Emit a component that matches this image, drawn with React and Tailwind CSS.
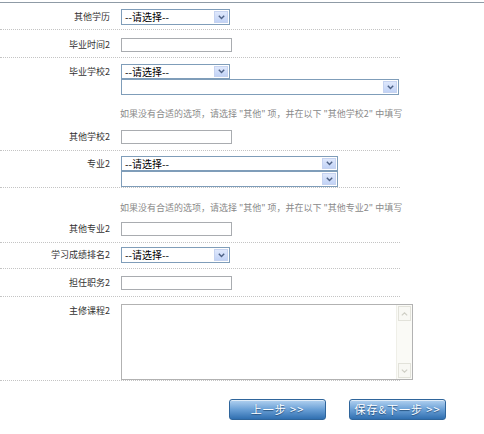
import React from 'react';

const FONT = { fontFamily: '"Noto Sans CJK SC", "Noto Sans", sans-serif' };

// XP-style dropdown box
function FakeSelect({ w, h = 16, text = '' }) {
  return (
    <div
      className="relative border border-[#7f9db9] bg-white text-[10px] leading-none text-black flex items-center pl-[3px]"
      style={{ width: w, height: h }}
    >
      <span>{text}</span>
      <span className="absolute right-px top-px bottom-px w-[14px] bg-gradient-to-b from-[#dfe8fc] to-[#c2d3f6] border border-[#c6d3f0] flex items-center justify-center">
        <svg width="7" height="5" viewBox="0 0 7 5">
          <path d="M0.8 0.8 L3.5 3.6 L6.2 0.8" fill="none" stroke="#4d6185" strokeWidth="1.4" />
        </svg>
      </span>
    </div>
  );
}

function TextBox({ w = 111 }) {
  return <div className="h-[14px] border border-[#a9acb0] bg-white" style={{ width: w }} />;
}

function Line({ label, h = 16, children, className = '' }) {
  return (
    <div className={`flex items-start ${className}`}>
      <div
        className="w-[110px] shrink-0 text-right text-[9px] text-[#333]"
        style={{ height: h, lineHeight: `${h}px` }}
      >
        {label}
      </div>
      <div className="ml-[11px]">{children}</div>
    </div>
  );
}

function Hint({ name, className = '' }) {
  return (
    <div className={`pl-[120px] h-[12px] leading-[12px] text-[9px] text-[#8a8a8a] whitespace-nowrap ${className}`}>
      如果没有合适的选项，请选择 "其他" 项，并在以下 "{name}" 中填写
    </div>
  );
}

function BlueButton({ children }) {
  return (
    <button
      className="w-[97px] h-[21px] rounded-[3px] border border-[#2f659b] bg-gradient-to-b from-[#b3d2f0] via-[#6aa0d6] to-[#2f6fb0] text-white text-[11px] leading-none tracking-[1px] shadow-[inset_0_1px_0_rgba(255,255,255,0.6)]"
      style={{ textShadow: '0 1px 1px #24507e' }}
    >
      {children}
    </button>
  );
}

export default function App() {
  return (
    <div className="w-[484px] h-[434px] bg-white overflow-hidden" style={FONT}>
      {/* top rule */}
      <div className="mt-[2px] h-px bg-[#8f9ba6]" />

      <div className="w-[400px]">
        {/* 其他学历 */}
        <div className="h-[27px] pt-[6px] border-b border-dotted border-[#c4c4c4]">
          <Line label="其他学历">
            <FakeSelect w={109} text="--请选择--" />
          </Line>
        </div>

        {/* 毕业时间2 */}
        <div className="h-[28px] pt-[8px] border-b border-dotted border-[#c4c4c4]">
          <Line label="毕业时间2" h={14}>
            <TextBox />
          </Line>
        </div>

        {/* 毕业学校2 + 其他学校2 */}
        <div className="h-[93px] pt-[6px] border-b border-dotted border-[#c4c4c4]">
          <Line label="毕业学校2" h={15}>
            <FakeSelect w={109} h={15} text="--请选择--" />
            <FakeSelect w={278} h={16} />
          </Line>
          <Hint name="其他学校2" className="mt-[13px]" />
          <Line label="其他学校2" h={14} className="mt-[10px]">
            <TextBox />
          </Line>
        </div>

        {/* 专业2 */}
        <div className="h-[37px] pt-[5px] border-b border-dotted border-[#c4c4c4]">
          <Line label="专业2" h={15}>
            <FakeSelect w={217} h={15} text="--请选择--" />
            <FakeSelect w={217} h={16} />
          </Line>
        </div>

        {/* 其他专业2 */}
        <div className="h-[55px] pt-[14px] border-b border-dotted border-[#c4c4c4]">
          <Hint name="其他专业2" />
          <Line label="其他专业2" h={14} className="mt-[8px]">
            <TextBox />
          </Line>
        </div>

        {/* 学习成绩排名2 */}
        <div className="h-[26px] pt-[4px] border-b border-dotted border-[#c4c4c4]">
          <Line label="学习成绩排名2">
            <FakeSelect w={109} text="--请选择--" />
          </Line>
        </div>

        {/* 担任职务2 */}
        <div className="h-[28px] pt-[7px] border-b border-dotted border-[#c4c4c4]">
          <Line label="担任职务2" h={14}>
            <TextBox />
          </Line>
        </div>

        {/* 主修课程2 */}
        <div className="h-[84px] pt-[7px] border-b border-dotted border-[#c4c4c4]">
          <Line label="主修课程2" h={14}>
            <div className="relative w-[292px] h-[76px] border border-[#b2b2b2] bg-white">
              <div className="absolute right-0 top-0 bottom-0 w-[16px] bg-[#fafaf6] border-l border-[#efefe8] flex flex-col justify-between">
                <div className="h-[15px] m-px border border-[#e2e2da] bg-[#f8f8f4] flex items-center justify-center">
                  <svg width="7" height="4" viewBox="0 0 7 4">
                    <path d="M0.8 3.4 L3.5 0.8 L6.2 3.4" fill="none" stroke="#cfcfc6" strokeWidth="1.2" />
                  </svg>
                </div>
                <div className="h-[15px] m-px border border-[#e2e2da] bg-[#f8f8f4] flex items-center justify-center">
                  <svg width="7" height="4" viewBox="0 0 7 4">
                    <path d="M0.8 0.6 L3.5 3.2 L6.2 0.6" fill="none" stroke="#cfcfc6" strokeWidth="1.2" />
                  </svg>
                </div>
              </div>
            </div>
          </Line>
        </div>
      </div>

      {/* buttons */}
      <div className="mt-[18px] pl-[229px] flex gap-[23px]">
        <BlueButton>上一步 &gt;&gt;</BlueButton>
        <BlueButton>保存&amp;下一步 &gt;&gt;</BlueButton>
      </div>
    </div>
  );
}
